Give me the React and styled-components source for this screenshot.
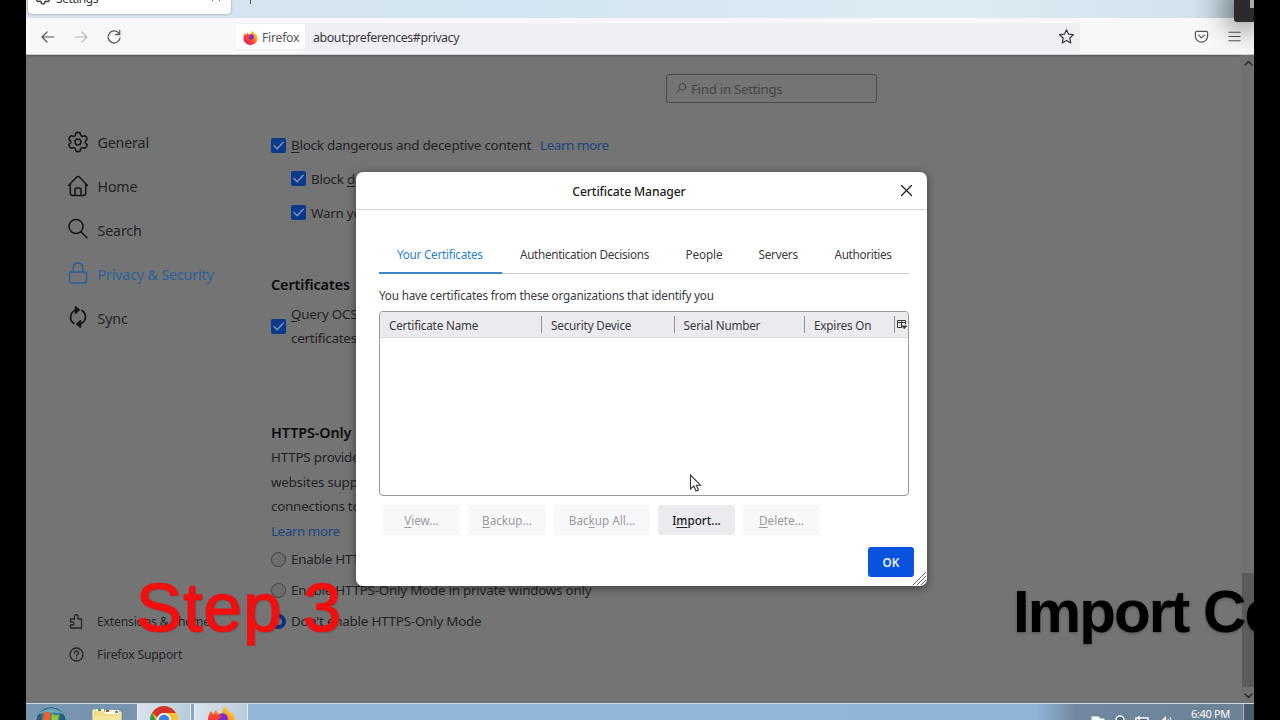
import React from 'react';
import styled, { createGlobalStyle } from 'styled-components';

const GlobalStyle = createGlobalStyle`
    * { box-sizing: border-box; }
    body {
        margin: 0;
        background: #000;
        font-family: 'Noto Sans', 'Open Sans', sans-serif;
        overflow: hidden;
    }
    u { text-underline-offset: 2px; text-decoration-thickness: 1px; }
`;

const Screen = styled.div`
    position: relative;
    width: 1280px;
    height: 720px;
    padding: 0 26px;
    overflow: hidden;
    background: #000;`;

const Desktop = styled.div`
    position: relative;
    display: flex;
    flex-direction: column;
    width: 1228px;
    height: 720px;
    overflow: hidden;`;

/* browser chrome */

const TabStrip = styled.div`
    display: flex;
    flex: none;
    height: 18px;
    background: linear-gradient(90deg, #d5e4ef, #d3e5f2 40%, #dcecf4 75%, #d3e3ee 95%, #a2b1bc);`;

const Tab = styled.div`
    display: flex;
    align-items: center;
    width: 203px;
    height: 34px;
    margin: -20px 0 0 2px;
    padding: 0 10px 0 7px;
    gap: 5px;
    font-size: 12px;
    letter-spacing: -0.45px;
    color: #333;
    background: #fff;
    border-radius: 4px;
    box-shadow: 0 0 2px rgba(0, 0, 0, 0.5);`;

const TabLabel = styled.span`
    flex: 1;
    margin-top: 2px;`;

const NewTab = styled.span`
    width: 1px;
    height: 4px;
    margin-left: 19px;
    background: #555;`;

const Toolbar = styled.div`
    display: flex;
    flex: none;
    align-items: center;
    height: 37px;
    padding: 1px 12px 0 14px;
    color: #56565d;
    background: #f8f8fa;
    border-bottom: 1px solid #cfcfd2;`;

const NavButtons = styled.div`
    display: flex;
    align-items: center;
    gap: 17px;
    width: 196px;`;

const UrlBar = styled.div`
    display: flex;
    align-items: center;
    width: 844px;
    height: 28px;
    padding-right: 5px;
    font-size: 12.4px;
    color: #38383d;
    background: #f0f0f4;
    border-radius: 3px;`;

const Identity = styled.div`
    display: flex;
    align-items: center;
    gap: 4px;
    width: 69px;
    height: 25px;
    padding: 1px 0 0 7px;
    font-size: 12.2px;
    letter-spacing: -0.25px;
    color: #55555c;
    background: #fff;
    border-radius: 2px;`;

const Url = styled.span`
    flex: 1;
    padding: 2px 0 0 8px;
    letter-spacing: -0.4px;`;

const ToolbarEnd = styled.div`
    display: flex;
    flex: 1;
    align-items: center;
    justify-content: flex-end;
    gap: 18px;`;

/* dimmed preferences page */

const Page = styled.div`
    display: flex;
    flex: none;
    height: 648px;
    color: #232326;
    background: #747474;
    box-shadow: inset 0 2px 2px -1px rgba(0, 0, 0, 0.25);`;

const Sidebar = styled.div`
    display: flex;
    flex-direction: column;
    width: 245px;
    padding: 66px 0 32px 41px;`;

const Category = styled.div`
    display: flex;
    align-items: center;
    gap: 8px;
    height: 43.8px;
    font-size: 14.2px;
    letter-spacing: -0.12px;
    color: ${props => (props.$active ? '#2a609c' : '#232326')};

    svg { flex: none; margin-top: -2px; color: ${props => (props.$active ? '#2a609c' : '#161618')}; }`;

const CategoryLabel = styled.span`
    padding-left: 0.5px;`;

const SidebarFoot = styled.div`
    display: flex;
    flex-direction: column;
    margin-top: auto;
    padding-left: 1px;`;

const FootLink = styled.div`
    display: flex;
    align-items: center;
    gap: 12px;
    height: 33px;
    font-size: 12.2px;
    letter-spacing: -0.2px;
    color: #252528;`;

const Main = styled.div`
    flex: 1;
    padding-top: 19px;
    font-size: 13.4px;
    letter-spacing: -0.23px;`;

const SearchBox = styled.div`
    display: flex;
    align-items: center;
    gap: 3px;
    width: 211px;
    height: 29px;
    margin-left: 395px;
    padding-left: 8px;
    font-size: 13.2px;
    color: #444447;
    border: 1px solid #4b4b4e;
    border-radius: 3px;`;

const CheckList = styled.div`
    margin-top: 25.6px;`;

const Row = styled.div`
    display: flex;
    align-items: center;
    gap: 5px;
    height: ${props => props.$height || 33.6}px;
    padding-left: ${props => props.$indent || 0}px;
    white-space: nowrap;`;

const Box = styled.span`
    display: flex;
    align-items: center;
    justify-content: center;
    flex: none;
    width: 15px;
    height: 15px;
    background: #0a3a8c;
    border-radius: 2px;`;

const Radio = styled.span`
    flex: none;
    width: 15px;
    height: 15px;
    background: ${props => (props.$on ? '#747474' : '#6d6d6d')};
    border: ${props => (props.$on ? '4px solid #06307c' : '1px solid #414144')};
    border-radius: 50%;`;

const Link = styled.a`
    margin-left: ${props => props.$gap || 0}px;
    letter-spacing: -0.42px;
    color: #1b4580;`;

const Heading = styled.h2`
    height: 24px;
    margin: ${props => props.$top}px 0 0;
    font-size: 14.4px;
    font-weight: 600;
    line-height: 24px;
    letter-spacing: -0.1px;
    color: #0c0c0e;`;

const Paragraph = styled.p`
    margin: 0;
    line-height: 24.7px;
    white-space: nowrap;`;

const Scrollbar = styled.div`
    display: flex;
    flex-direction: column;
    align-items: center;
    width: 13px;
    padding: 4px 0 3px 2px;
    color: #252525;
    background: #717171;`;

const Thumb = styled.div`
    width: 13px;
    height: 114px;
    margin: auto -1px 4px -2px;
    background: #5b5b5d;`;

/* certificate dialog */

const Dialog = styled.div`
    position: absolute;
    left: 330px;
    top: 172px;
    display: flex;
    flex-direction: column;
    width: 571px;
    height: 414px;
    font-size: 11.7px;
    letter-spacing: -0.18px;
    color: #3a3a3e;
    background: #fff;
    border-radius: 7px;
    box-shadow: 0 2px 8px rgba(0, 0, 0, 0.5);`;

const DialogTitle = styled.div`
    display: grid;
    grid-template-columns: 1fr 41px;
    align-items: center;
    justify-items: center;
    flex: none;
    height: 38px;
    font-size: 12.2px;
    font-weight: 500;
    color: #1d1d20;
    border-bottom: 1px solid #d2d2d5;

    span { padding: 2px 0 0 16px; letter-spacing: -0.13px; }`;

const DialogBody = styled.div`
    display: flex;
    flex-direction: column;
    padding: 26px 17px 0 23px;`;

const Tabs = styled.div`
    display: flex;
    width: 530px;
    height: 38px;
    border-bottom: 1px solid #cfcfd3;`;

const DialogTab = styled.div`
    flex: none;
    width: ${props => props.$width}px;
    height: 38px;
    padding: 9px 0 0 18px;
    line-height: 18px;
    letter-spacing: ${props => props.$tracking || -0.2}px;
    white-space: nowrap;
    color: ${props => (props.$active ? '#2b83cc' : '#3b3b40')};
    border-bottom: ${props => (props.$active ? '2px solid #3f86c6' : 'none')};`;

const Description = styled.div`
    height: 37px;
    padding-top: 12px;
    line-height: 18px;`;

const Tree = styled.div`
    width: 530px;
    height: 185px;
    overflow: hidden;
    border: 1px solid #98989c;
    border-radius: 4px;`;

const TreeHead = styled.div`
    display: grid;
    grid-template-columns: 162px 132.5px 130.5px 90px 13px;
    align-items: center;
    height: 26px;
    background: #ebebef;
    border-bottom: 1px solid #d9d9dd;`;

const TreeCol = styled.div`
    height: 17px;
    padding-left: 9px;
    line-height: 18px;
    border-right: 1px solid #939398;`;

const ColPicker = styled.div`
    display: flex;
    justify-content: center;`;

const Actions = styled.div`
    display: flex;
    gap: 8px;
    margin-top: 9px;
    padding-left: 4px;`;

const Button = styled.button`
    width: ${props => props.$width || 77}px;
    height: 30px;
    padding: 0;
    font: inherit;
    font-weight: ${props => (props.$enabled ? 500 : 400)};
    letter-spacing: 0;
    color: ${props => (props.$enabled ? '#222226' : '#99999e')};
    background: ${props => (props.$enabled ? '#ebebef' : '#f8f8fa')};
    border: none;
    border-radius: 3px;`;

const OkButton = styled(Button)`
    align-self: flex-end;
    margin: 12px -4px 0 0;
    font-weight: 600;
    color: #e9f2ff;
    background: #0a53de;`;

const Grip = styled.svg`
    position: absolute;
    right: 0;
    bottom: 0;`;

const Cursor = styled.svg`
    position: absolute;
    left: 663px;
    top: 474px;`;

/* video captions */

const Caption = styled.div`
    position: absolute;
    left: ${props => props.$x}px;
    top: ${props => props.$y}px;
    font-family: 'Liberation Sans', Arial, sans-serif;
    line-height: 1;
    white-space: nowrap;`;

const StepCaption = styled(Caption)`
    font-size: 69px;
    letter-spacing: 1.2px;
    color: #f01010;
    -webkit-text-stroke: 1.6px #f01010;
    text-shadow: 1px 1px 2px rgba(0, 0, 0, 0.3);`;

const TitleCaption = styled(Caption)`
    font-size: 60px;
    font-weight: bold;
    letter-spacing: -1.9px;
    color: #000;
    text-shadow: 0 1px 3px rgba(0, 0, 0, 0.3);`;

const CornerBadge = styled.div`
    position: absolute;
    right: 0;
    top: 0;
    width: 20px;
    height: 22px;
    background: #2b2b2b;
    border-bottom-left-radius: 3px;
    box-shadow: 0 0 26px 8px rgba(0, 0, 0, 0.38);

    span {
        display: block;
        width: 4px;
        height: 8px;
        margin-left: 16px;
        background: #aaa;
    }`;

/* windows taskbar */

const Taskbar = styled.div`
    display: flex;
    flex: none;
    height: 17px;
    background: linear-gradient(90deg, #7995b0 0, #7792ac 100px, #93b7d8 225px, #91b5d8 1010px, #7088a0 1050px, #6c8195);
    border-top: 1px solid #c9dbe9;
    overflow: hidden;`;

const TaskButton = styled.div`
    width: ${props => props.$width}px;
    height: 40px;
    margin-right: ${props => props.$gap || 0}px;
    background: ${props => (props.$open ? 'linear-gradient(100deg, #d9e4ee, #b5c9da)' : 'none')};
    border: ${props => (props.$open ? '1px solid #eaf2f8' : 'none')};
    border-top: none;

    svg { display: block; margin: 1px auto 0; }`;

const Tray = styled.div`
    display: flex;
    gap: 9px;
    margin-left: auto;
    padding: 11px 11px 0 0;`;

const Clock = styled.div`
    width: 60px;
    margin-top: 1px;
    padding-left: 8px;
    font-size: 11px;
    line-height: 17px;
    letter-spacing: -0.35px;
    white-space: nowrap;
    color: #fff;`;

const ShowDesktop = styled.div`
    width: 11px;
    height: 20px;
    background: #4b5c6e;
    border-left: 1px solid #a9bac9;`;

function Icon({ size = 20, box = 20, width = 1.5, children }) {
    return (
        <svg width={size} height={size} viewBox={`0 0 ${box} ${box}`} fill="none" stroke="currentColor"
            strokeWidth={width} strokeLinecap="round" strokeLinejoin="round">
            {children}
        </svg>
    );
}

function Gear({ size, width }) {
    return (
        <Icon size={size} box={24} width={width}>
            <path d="M9.7 2.2Q12 .8 14.3 2.2L15 5l1.6.9 2.9-.8q2.2 1 2.4 3.9L20 11.2v1.7l2 2.1q-.3 2.8-2.5 3.9l-2.9-.8-1.6.9-.7 2.8q-2.3 1.4-4.6 0L9 19l-1.6-.9-2.9.8Q2.3 17.800 2 15l2-2.100v-1.700L2.100 9q.3-2.900 2.400-3.900l2.900.8L9 5z" />
            <circle cx="12" cy="12" r="3.200" />
        </Icon>
    );
}

function Check() {
    return (
        <Box>
            <Icon size={13} box={13} width={1.4}>
                <path d="M2 6.500l3.200 3.200 6-6.500" stroke="#8095bb" />
            </Icon>
        </Box>
    );
}

function FirefoxLogo({ size }) {
    return (
        <svg width={size} height={size} viewBox="0 0 32 32">
            <defs>
                <linearGradient id="fox" x1="1" y1="0" x2="0.2" y2="1">
                    <stop offset="0" stopColor="#fff04a" />
                    <stop offset="0.4" stopColor="#ff9a1f" />
                    <stop offset="0.7" stopColor="#ff3b3f" />
                    <stop offset="1" stopColor="#e1107d" />
                </linearGradient>
            </defs>
            <path d="M4 7l3 3 3-5 2 4 5 1c-1-4 1-7 4-9 0 4 3 5 5 8l2-1c2 4 3 7 3 10a15 14 0 0 1-30 0c0-4 1-8 3-11z" fill="url(#fox)" />
            <circle cx="17" cy="15" r="6" fill="#7b2bd6" />
            <path d="M5 11c5-2 8 0 12 2l-5 3c0 4 5 5 9 3-2 6-12 6-15 0z" fill="#f5432b" />
        </svg>
    );
}

function ChromeLogo() {
    return (
        <svg width="30" height="30" viewBox="0 0 30 30">
            <circle cx="15" cy="15" r="14" fill="#f8c22d" />
            <path d="M2.900 8A14 14 0 0 1 27.100 8H15a7 7 0 0 0-6.500 4.500z" fill="#d4322c" />
            <path d="M2.900 8A14 14 0 0 0 14 29l5-9-10-1z" fill="#2c9b48" />
            <circle cx="15" cy="15" r="7" fill="#fff" />
            <circle cx="15" cy="15" r="5.400" fill="#3d7fe6" />
        </svg>
    );
}

function StartOrb() {
    return (
        <svg width="34" height="34" viewBox="0 0 34 34">
            <defs>
                <radialGradient id="orb" cx="0.5" cy="0.3" r="0.6">
                    <stop offset="0" stopColor="#3a8bab" />
                    <stop offset="1" stopColor="#1c4664" />
                </radialGradient>
            </defs>
            <circle cx="17" cy="17" r="15.500" fill="url(#orb)" stroke="#7fa8bd" />
            <path d="M4 9Q17-2 30 9 17 6 4 9z" fill="#8cb6c6" opacity="0.7" />
            <path d="M10 8q3-2 7 0l-1 8q-4-2-8 0z" fill="#e8622b" />
            <path d="M18 9q4 2 7 0l-1 8q-4 1-7-1z" fill="#8cc43e" />
            <path d="M8 17q4-2 8 0l-1 8q-4-2-8 0z" fill="#3a9be0" />
        </svg>
    );
}

function FolderIcon() {
    return (
        <svg width="32" height="30" viewBox="0 0 32 30">
            <path d="M2 5h9l2 2h17v20H2z" fill="#f0dc87" stroke="#fbf3c0" />
            <path d="M5 4h8v2H5zM14 5h14v4H14z" fill="#fffbe5" />
            <path d="M7 4h3v2H7z" fill="#2d9b4a" />
            <path d="M15 5h3v2h-3z" fill="#c9442f" />
            <path d="M24 6h3v2h-3z" fill="#3c8bc5" />
            <path d="M2 11h28v16H2z" fill="#f5e59b" />
        </svg>
    );
}

const tabs = [
    { name: 'Your Certificates', width: 123, tracking: -0.25, active: true },
    { name: 'Authentication Decisions', width: 165.5, tracking: -0.3 },
    { name: 'People', width: 73, tracking: -0.1 },
    { name: 'Servers', width: 76 },
    { name: 'Authorities', width: 92, tracking: -0.3 },
];

const columns = ['Certificate Name', 'Security Device', 'Serial Number', 'Expires On'];

export default function App() {
    return (
        <Screen>
            <GlobalStyle />
            <Desktop>
                <TabStrip>
                    <Tab>
                        <Gear size={16} width={2} />
                        <TabLabel>Settings</TabLabel>
                        <Icon size={10} box={10} width={1}><path d="M1.500 1.500l7 7M8.500 1.500l-7 7" /></Icon>
                    </Tab>
                    <NewTab />
                </TabStrip>
                <Toolbar>
                    <NavButtons>
                        <Icon size={16} box={16} width={1.2}><path d="M14 8H2.500M7 3L2 8l5 5" /></Icon>
                        <Icon size={16} box={16} width={1.2}><path d="M2 8h11.500M9 3l5 5-5 5" stroke="#b9b9be" /></Icon>
                        <Icon size={16} box={16} width={1.300}>
                            <path d="M13 4.500A6 6 0 1 0 14 9M13.700 1.500v4h-4" />
                        </Icon>
                    </NavButtons>
                    <UrlBar>
                        <Identity>
                            <FirefoxLogo size={15} />
                            Firefox
                        </Identity>
                        <Url>about:preferences#privacy</Url>
                        <Icon size={17} box={18} width={1.300}>
                            <path d="M9 1.800l2.200 4.700 5.100.6-3.800 3.500 1 5.200L9 13.200l-4.500 2.600 1-5.200L1.700 7.100l5.100-.6z" />
                        </Icon>
                    </UrlBar>
                    <ToolbarEnd>
                        <Icon size={15} box={16} width={1.300}>
                            <path d="M3 2.500h10a1.500 1.500 0 0 1 1.500 1.500v3.500a6.500 6.500 0 0 1-13 0V4A1.500 1.500 0 0 1 3 2.500zM5 6.500l3 3 3-3" />
                        </Icon>
                        <Icon size={15} box={16} width={1.100}><path d="M2 3.500h12M2 8h12M2 12.500h12" /></Icon>
                    </ToolbarEnd>
                </Toolbar>

                <Page>
                    <Sidebar>
                        <Category>
                            <Gear size={22} width={1.700} />
                            <CategoryLabel>General</CategoryLabel>
                        </Category>
                        <Category>
                            <Icon size={22} box={22}>
                                <path d="M1.500 10.500l8-8.300q1.500-1.200 3 0l8 8.300M3.300 9v9q0 2.500 2.500 2.500h10.400q2.500 0 2.500-2.500V9M8 20v-5.500q0-1.500 1.500-1.500h3q1.500 0 1.500 1.500V20" />
                            </Icon>
                            <CategoryLabel>Home</CategoryLabel>
                        </Category>
                        <Category>
                            <Icon size={22} box={22}><circle cx="9" cy="8.500" r="7" /><path d="M14 13.700l6 6" /></Icon>
                            <CategoryLabel>Search</CategoryLabel>
                        </Category>
                        <Category $active>
                            <Icon size={22} box={22}>
                                <rect x="2.500" y="10" width="17" height="11" rx="2" />
                                <path d="M6.300 10V6Q6.300 1 11 1t4.700 5v4" />
                            </Icon>
                            <CategoryLabel>Privacy &amp; Security</CategoryLabel>
                        </Category>
                        <Category>
                            <Icon size={22} box={22} width={1.700}>
                                <path d="M7 17.500A7.500 7.500 0 0 1 9 4M15 4.500A7.500 7.500 0 0 1 13 18" />
                                <path d="M8.500 1v6l3.500-3zM13.500 15v6L10 18z" fill="currentColor" />
                            </Icon>
                            <CategoryLabel>Sync</CategoryLabel>
                        </Category>
                        <SidebarFoot>
                            <FootLink>
                                <Icon size={17} box={17} width={1.300}>
                                    <path d="M2.500 6h4V3.500a1.800 1.800 0 0 1 3.600 0V6h3.400v9h-11v-3h2a1.600 1.600 0 0 0 0-3.200h-2z" />
                                </Icon>
                                Extensions &amp; Themes
                            </FootLink>
                            <FootLink>
                                <Icon size={17} box={17} width={1.300}>
                                    <circle cx="8.500" cy="8.500" r="6.500" />
                                    <path d="M6.500 7a2 2 0 1 1 2.800 1.700q-.8.400-.8 1.100M8.500 12v.1" />
                                </Icon>
                                Firefox Support
                            </FootLink>
                        </SidebarFoot>
                    </Sidebar>

                    <Main>
                        <SearchBox>
                            <Icon size={13} box={13} width={1}><circle cx="7.500" cy="4.800" r="3.300" /><path d="M5 7.300L1.500 11" /></Icon>
                            Find in Settings
                        </SearchBox>
                        <CheckList>
                            <Row>
                                <Check />
                                <span><u>B</u>lock dangerous and deceptive content</span>
                                <Link $gap={4}>Learn more</Link>
                            </Row>
                            <Row $indent={20}><Check /><span>Block <u>d</u>angerous downloads</span></Row>
                            <Row $indent={20}><Check /><span>Warn you about unwanted software</span></Row>
                        </CheckList>
                        <Heading $top={43.6}>Certificates</Heading>
                        <Row $height={59}>
                            <Check />
                            <Paragraph><u>Q</u>uery OCSP responder servers<br />certificates</Paragraph>
                        </Row>
                        <Heading $top={65}>HTTPS-Only Mode</Heading>
                        <Paragraph>
                            HTTPS provides a secure<br />
                            websites support HTTPS<br />
                            connections to<br />
                            <Link>Learn more</Link>
                        </Paragraph>
                        <Row $height={31}><Radio />Enable HTTPS-Only Mode</Row>
                        <Row $height={31}><Radio />Enable HTTPS-Only Mode in private windows only</Row>
                        <Row $height={31}><Radio $on />Don't enable HTTPS-Only Mode</Row>
                    </Main>

                    <Scrollbar>
                        <Icon size={9} box={9} width={1.400}><path d="M1 6l3.500-3.500L8 6" /></Icon>
                        <Thumb />
                        <Icon size={9} box={9} width={1.400}><path d="M1 3l3.500 3.500L8 3" /></Icon>
                    </Scrollbar>
                </Page>

                <Taskbar>
                    <TaskButton $width={50}><StartOrb /></TaskButton>
                    <TaskButton $width={61}><FolderIcon /></TaskButton>
                    <TaskButton $open $width={54} $gap={3}><ChromeLogo /></TaskButton>
                    <TaskButton $open $width={54}><FirefoxLogo size={29} /></TaskButton>
                    <Tray>
                        <svg width="14" height="14" viewBox="0 0 14 14"><path d="M1 1v12M2 2h6v2h5v7H2z" fill="#fff" stroke="#fff" /></svg>
                        <svg width="12" height="14" viewBox="0 0 12 14"><path d="M2 5a4 4 0 0 1 8 0v7H2z" fill="#56697c" stroke="#fff" strokeWidth="1.500" /></svg>
                        <svg width="14" height="14" viewBox="0 0 14 14"><path d="M1 3h12v8H1zM4 1v6" fill="#56697c" stroke="#fff" strokeWidth="1.500" /></svg>
                        <svg width="14" height="14" viewBox="0 0 14 14"><path d="M1 5h3l4-4v12L4 9H1z" fill="#fff" /><path d="M10 4q2 3 0 6M12 2q3 5 0 10" fill="none" stroke="#dfe7ee" /></svg>
                    </Tray>
                    <Clock>6:40 PM</Clock>
                    <ShowDesktop />
                </Taskbar>

                <Dialog>
                    <DialogTitle>
                        <span>Certificate Manager</span>
                        <Icon size={17} box={17} width={1.200}><path d="M3.500 3.500l10 10M13.500 3.500l-10 10" /></Icon>
                    </DialogTitle>
                    <DialogBody>
                        <Tabs>
                            {tabs.map(tab => (
                                <DialogTab key={tab.name} $width={tab.width} $tracking={tab.tracking} $active={tab.active}>
                                    {tab.name}
                                </DialogTab>
                            ))}
                        </Tabs>
                        <Description>You have certificates from these organizations that identify you</Description>
                        <Tree>
                            <TreeHead>
                                {columns.map(name => <TreeCol key={name}>{name}</TreeCol>)}
                                <ColPicker>
                                    <Icon size={11} box={11} width={1}>
                                        <path d="M9.500 5V1.500h-8v7h4M1.500 3.500h8M5.500 1.500v7" />
                                        <path d="M6.500 7h4l-2 2.500z" fill="currentColor" />
                                    </Icon>
                                </ColPicker>
                            </TreeHead>
                        </Tree>
                        <Actions>
                            <Button><u>V</u>iew...</Button>
                            <Button $width={78}><u>B</u>ackup...</Button>
                            <Button $width={96}>Bac<u>k</u>up All...</Button>
                            <Button $enabled>I<u>m</u>port...</Button>
                            <Button $width={77}><u>D</u>elete...</Button>
                        </Actions>
                        <OkButton $width={46}>OK</OkButton>
                    </DialogBody>
                    <Grip width="15" height="15" viewBox="0 0 15 15" stroke="#66666a" fill="none">
                        <path d="M1 14L14 1M5 14l9-9M9 14l5-5" />
                    </Grip>
                </Dialog>

                <Cursor width="14" height="20" viewBox="0 0 14 20">
                    <path d="M1.500 1v14l3.300-3 2.300 5 2.400-1-2.200-4.800h4.200z" fill="#fff" stroke="#38383c" strokeWidth="1.100" />
                </Cursor>

                <StepCaption $x={110} $y={573}>Step 3</StepCaption>
                <TitleCaption $x={987} $y={582}>Import Certificate</TitleCaption>
                <CornerBadge><span /></CornerBadge>
            </Desktop>
        </Screen>
    );
}
